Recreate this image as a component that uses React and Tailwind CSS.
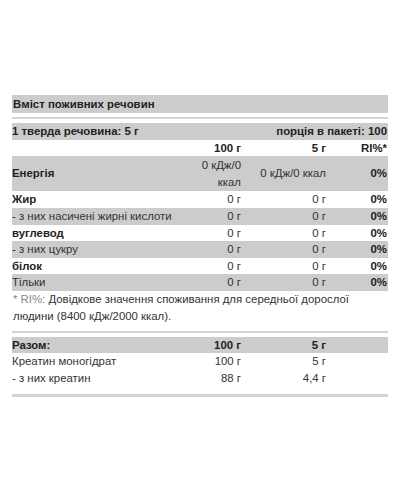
const grid = "grid grid-cols-[1fr_50px_85px_58px] leading-[16.6px]";

const rows = [
  { label: "Жир", bold: true, a: "0 г", b: "0 г", ri: "0%", gray: false },
  { label: "- з них насичені жирні кислоти", bold: false, a: "0 г", b: "0 г", ri: "0%", gray: true },
  { label: "вуглевод", bold: true, a: "0 г", b: "0 г", ri: "0%", gray: false },
  { label: "- з них цукру", bold: false, a: "0 г", b: "0 г", ri: "0%", gray: true },
  { label: "білок", bold: true, a: "0 г", b: "0 г", ri: "0%", gray: false },
  { label: "Тільки", bold: false, a: "0 г", b: "0 г", ri: "0%", gray: true },
];

export default function App() {
  return (
    <div
      className="w-[400px] h-[500px] bg-white px-3 pt-[95px] text-[11.4px] text-[#333]"
      style={{ fontFamily: '"Liberation Sans", Arial, sans-serif' }}
    >
      {/* titulo */}
      <div className="bg-[#cccccc] h-[18px] leading-[18px] px-px font-bold text-[#222]">
        Вміст поживних речовин
      </div>
      <div className="mt-1 h-[2px] bg-[#d4d4d4]" />

      {/* tabla principal */}
      <div className="mt-1 bg-[#cccccc] flex justify-between leading-[16.6px] font-bold text-[#222]">
        <span>1 тверда речовина: 5 г</span>
        <span className="pr-px">порція в пакеті: 100</span>
      </div>
      <div className={`${grid} font-bold text-[#222]`}>
        <span />
        <span className="text-right pr-1">100 г</span>
        <span className="text-right pr-1">5 г</span>
        <span className="text-right pr-px">RI%*</span>
      </div>
      <div className={`${grid} bg-[#cccccc] py-px items-center`}>
        <span className="font-bold text-[#222]">Енергія</span>
        <span className="text-right pr-1">
          0 кДж/0
          <br />
          ккал
        </span>
        <span className="text-right pr-1">0 кДж/0 ккал</span>
        <span className="text-right pr-px font-bold text-[#222]">0%</span>
      </div>
      {rows.map((r, i) => (
        <div key={i} className={`${grid} ${r.gray ? "bg-[#cccccc]" : ""}`}>
          <span className={r.bold ? "font-bold text-[#222]" : ""}>{r.label}</span>
          <span className="text-right pr-1">{r.a}</span>
          <span className="text-right pr-1">{r.b}</span>
          <span className="text-right pr-px font-bold text-[#222]">{r.ri}</span>
        </div>
      ))}

      {/* nota */}
      <p className="leading-[17px] pl-px">
        <span className="text-[#888]">* RI%:</span> Довідкове значення споживання для середньої дорослої
        <br />
        людини (8400 кДж/2000 ккал).
      </p>
      <div className="mt-[6px] h-[2px] bg-[#d4d4d4]" />

      {/* composicion */}
      <div className={`${grid} mt-1 bg-[#cccccc] font-bold text-[#222] leading-[16px]`}>
        <span>Разом:</span>
        <span className="text-right pr-1">100 г</span>
        <span className="text-right pr-1">5 г</span>
        <span />
      </div>
      <div className={`${grid} leading-[16.5px]`}>
        <span>Креатин моногідрат</span>
        <span className="text-right pr-1">100 г</span>
        <span className="text-right pr-1">5 г</span>
        <span />
      </div>
      <div className={`${grid} leading-[16.5px]`}>
        <span>- з них креатин</span>
        <span className="text-right pr-1">88 г</span>
        <span className="text-right pr-1">4,4 г</span>
        <span />
      </div>
      <div className="mt-2 h-[3px] bg-[#d4d4d4]" />
    </div>
  );
}
